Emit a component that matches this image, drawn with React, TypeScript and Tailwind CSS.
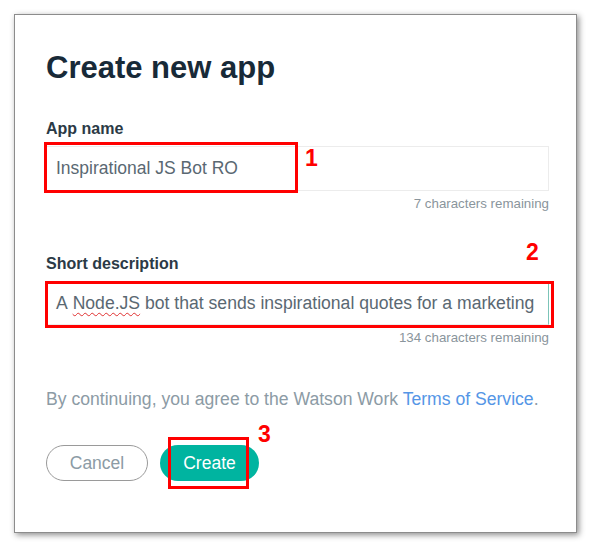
export default function App() {
  return (
    <div className="w-[593px] h-[547px] bg-white pt-[14px] pl-[14px] font-['Liberation_Sans',Arial,sans-serif]">
      <div className="relative w-[563px] h-[519px] bg-white border border-[#8c8c8c] shadow-[2px_2px_6px_rgba(0,0,0,0.45)] pl-[31px] pr-[27px] pt-[34px]">
        <h1 className="text-[31px] font-bold text-[#182a38] leading-[38px]">Create new app</h1>

        {/* App name */}
        <div className="mt-[32px] text-[16px] font-bold text-[#2b3a46] leading-[20px]">App name</div>
        <div className="mt-[7px] h-[45px] border border-[#ececec] flex items-center px-[9px] text-[17.5px] text-[#5a6872]">
          Inspirational JS Bot RO
        </div>
        <div className="mt-[5px] text-right text-[13.3px] text-[#8a959c] leading-[16px]">7 characters remaining</div>

        {/* Short description */}
        <div className="mt-[42px] text-[16px] font-bold text-[#2b3a46] leading-[20px]">Short description</div>
        <div className="mt-[7px] h-[44px] border border-[#ececec] border-r-[#7cc4b8] flex items-center px-[9px] text-[17.6px] text-[#5a6872] whitespace-nowrap overflow-hidden">
          A&nbsp;<span className="underline decoration-wavy decoration-[#e03030] decoration-1 underline-offset-[3px]">Node.JS</span>&nbsp;bot that sends inspirational quotes for a marketing
        </div>
        <div className="mt-[5px] text-right text-[13.3px] text-[#8a959c] leading-[16px]">134 characters remaining</div>

        <p className="mt-[42px] text-[17.6px] text-[#8c9ba5] leading-[22px]">
          By continuing, you agree to the Watson Work <span className="text-[#5596e6]">Terms of Service</span>.
        </p>

        <div className="mt-[35px] flex gap-[12px]">
          <button className="w-[102px] h-[36px] rounded-full border border-[#9a9a9a] text-[17.5px] text-[#8c9ba5]">Cancel</button>
          <button className="w-[99px] h-[36px] rounded-full bg-[#00b4a0] text-[17.5px] text-white">Create</button>
        </div>

        {/* annotation overlays */}
        <div className="absolute left-[29px] top-[127px] w-[254px] h-[51px] border-[3px] border-[#ff0000]" />
        <div className="absolute left-[290px] top-[132px] text-[23px] font-black text-[#ff0000] leading-none">1</div>
        <div className="absolute left-[30px] top-[266px] w-[509px] h-[47px] border-[3px] border-[#ff0000]" />
        <div className="absolute left-[511px] top-[226px] text-[23px] font-black text-[#ff0000] leading-none">2</div>
        <div className="absolute left-[153px] top-[422px] w-[81px] h-[52px] border-[3px] border-[#ff0000]" />
        <div className="absolute left-[243px] top-[408px] text-[23px] font-black text-[#ff0000] leading-none">3</div>
      </div>
    </div>
  );
}
